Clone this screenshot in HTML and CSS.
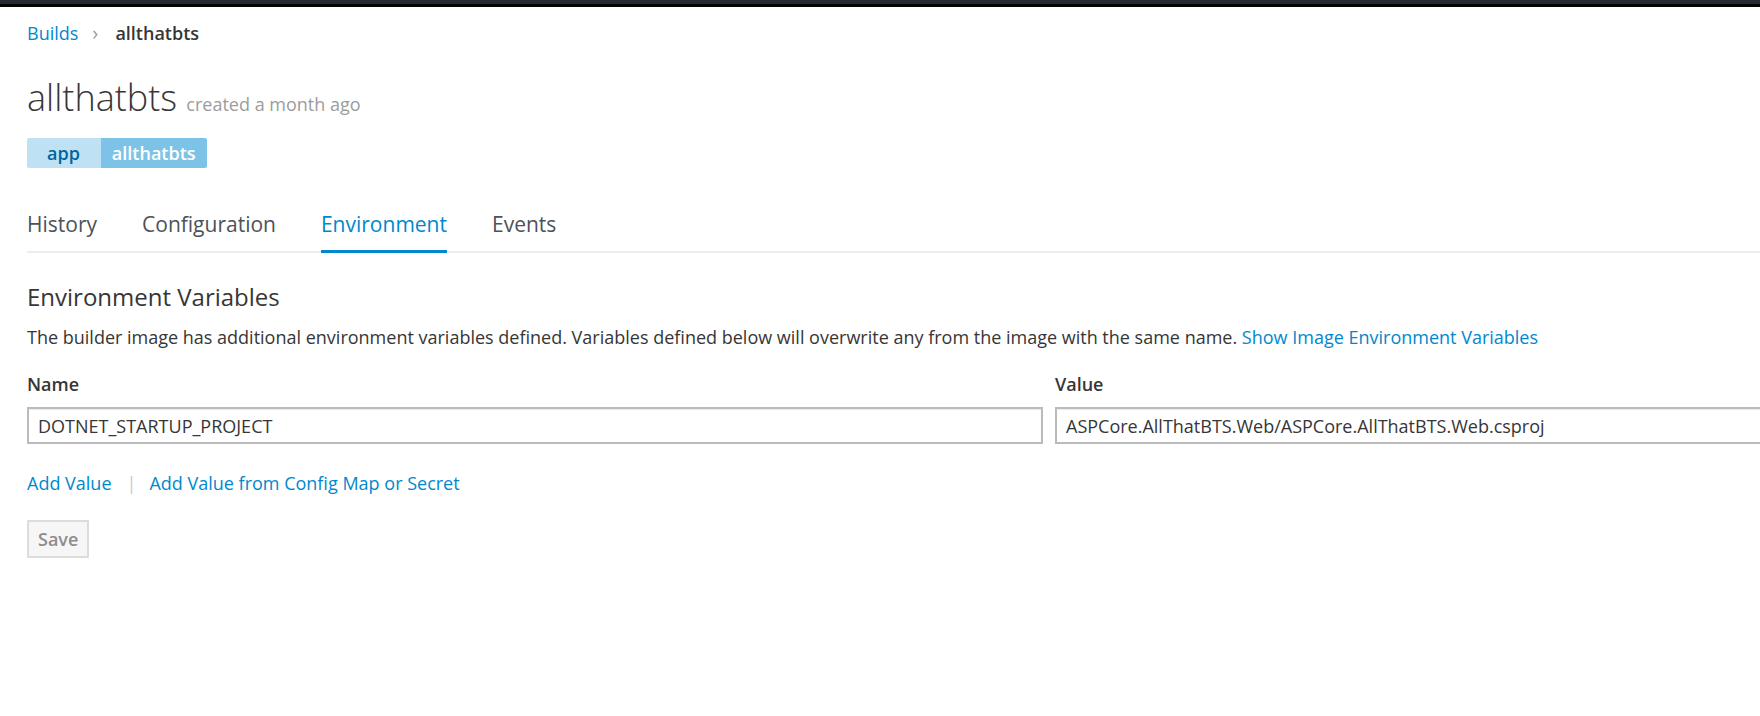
FILE: index.html
```
<!DOCTYPE html>
<html lang="en">
<head>
<meta charset="utf-8">
<title>allthatbts - Builds</title>
<link rel="stylesheet" href="styles.css">
</head>
<body>
<div class="topbar"></div>
<div class="page">
  <nav class="breadcrumb">
    <a class="crumb-link" href="#">Builds</a>
    <span class="crumb-sep">&#8250;</span>
    <strong class="crumb-active">allthatbts</strong>
  </nav>

  <h1 class="title">allthatbts <small class="title-meta">created a month ago</small></h1>

  <div class="labels">
    <span class="label-key">app</span><span class="label-value">allthatbts</span>
  </div>

  <ul class="tabs">
    <li><a href="#">History</a></li>
    <li><a href="#">Configuration</a></li>
    <li><a class="active" href="#">Environment</a></li>
    <li><a href="#">Events</a></li>
  </ul>

  <h3 class="section-title">Environment Variables</h3>
  <p class="help">The builder image has additional environment variables defined. Variables defined below will overwrite any from the image with the same name. <a href="#">Show Image Environment Variables</a></p>

  <div class="env-grid">
    <label class="field-label">Name</label>
    <label class="field-label">Value</label>
    <input class="field" type="text" value="DOTNET_STARTUP_PROJECT">
    <input class="field" type="text" value="ASPCore.AllThatBTS.Web/ASPCore.AllThatBTS.Web.csproj">
  </div>

  <div class="add-links">
    <a href="#">Add Value</a>
    <span class="divider">|</span>
    <a href="#">Add Value from Config Map or Secret</a>
  </div>

  <button class="btn-save" disabled>Save</button>
</div>
</body>
</html>
```
FILE: styles.css
```
html, body {
  margin: 0;
  padding: 0;
  overflow: hidden;
  background: #fff;
}
body {
  font-family: "Open Sans", "Liberation Sans", sans-serif;
  font-size: 18px;
  line-height: 30px;
  color: #363636;
}
a {
  color: #0088ce;
  text-decoration: none;
}
.topbar {
  height: 4px;
  background: #262a33;
  border-bottom: 3px solid #030303;
}
.page {
  width: 2044px;
  padding-left: 27px;
}
.breadcrumb {
  margin-top: 11px;
  display: flex;
  align-items: center;
  height: 30px;
}
.crumb-sep {
  color: #9c9c9c;
  margin: 0 17px 0 14px;
  font-size: 20px;
}
.crumb-active {
  font-weight: 600;
  color: #363636;
}
.title {
  margin: 31px 0 0;
  font-size: 36px;
  font-weight: 300;
  line-height: 37px;
  color: #363636;
}
.title-meta {
  font-size: 18px;
  font-weight: 400;
  color: #9c9c9c;
}
.labels {
  margin-top: 15px;
  display: flex;
  height: 30px;
  font-size: 18px;
  font-weight: 600;
  line-height: 30px;
}
.label-key {
  background: #bee1f4;
  color: #00659c;
  padding: 0 21px 0 20px;
  border-radius: 2px 0 0 2px;
}
.label-value {
  background: #7dc3e8;
  color: #fff;
  padding: 0 11px;
  border-radius: 0 2px 2px 0;
}
.tabs {
  list-style: none;
  margin: 41px 0 0;
  padding: 0;
  display: flex;
  border-bottom: 2px solid #ededed;
}
.tabs li a {
  position: relative;
  display: block;
  margin-right: 45px;
  padding-bottom: 12px;
  font-size: 21px;
  line-height: 30px;
  color: #4d5258;
}
.tabs li a.active {
  color: #0088ce;
}
.tabs li a.active::after {
  content: "";
  position: absolute;
  left: 0;
  right: 0;
  bottom: -2px;
  height: 3px;
  background: #0088ce;
}
.section-title {
  margin: 30px 0 0;
  font-size: 24px;
  font-weight: 400;
  line-height: 27px;
  color: #363636;
}
.help {
  margin: 12px 0 0;
}
.env-grid {
  margin-top: 17px;
  display: grid;
  grid-template-columns: 1fr 1fr;
  column-gap: 12px;
  row-gap: 8px;
}
.field-label {
  font-weight: 600;
  line-height: 30px;
}
.field {
  box-sizing: border-box;
  height: 37px;
  margin: 0;
  padding: 0 9px;
  border: 2px solid #bbbbbb;
  border-radius: 0;
  box-shadow: inset 0 1px 1px rgba(3, 3, 3, 0.08);
  font-family: "Open Sans", "Liberation Sans", sans-serif;
  font-size: 18px;
  color: #363636;
  background: #fff;
}
.add-links {
  margin-top: 24px;
  display: flex;
  align-items: center;
}
.divider {
  color: #c8c8c8;
  margin: 0 13px 0 15px;
}
.btn-save {
  display: block;
  margin-top: 22px;
  box-sizing: border-box;
  height: 38px;
  padding: 0 9px;
  border: 2px solid #dcdcdc;
  border-radius: 1px;
  background: #f6f6f6;
  color: #8d8d8d;
  font-family: "Open Sans", "Liberation Sans", sans-serif;
  font-size: 18px;
  font-weight: 600;
}
```
